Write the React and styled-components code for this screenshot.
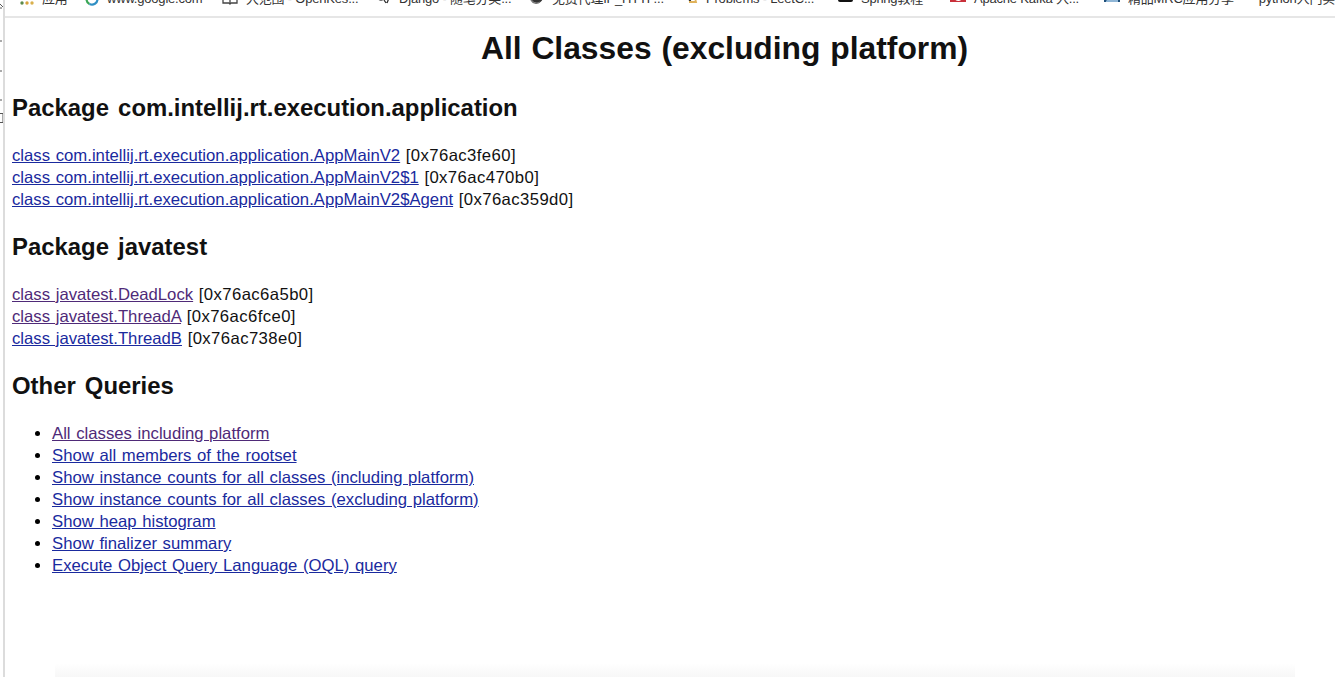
import React from 'react'
import styled, { createGlobalStyle } from 'styled-components'

const GlobalStyle = createGlobalStyle`
  html, body {
    margin: 0;
    padding: 0;
    height: 100%;
    background: #fff;
    overflow: hidden;
  }
  body {
    font-family: "Liberation Sans", Arial, "Noto Sans CJK SC", sans-serif;
    color: #000;
  }
`

const AppsIcon = () => (
  <svg width="14" height="14" viewBox="0 0 14 14">
    <circle cx="2" cy="11" r="1.7" fill="#5b8a4a" />
    <circle cx="7" cy="11" r="1.7" fill="#d9a23c" />
    <circle cx="12" cy="11" r="1.7" fill="#d9b04c" />
  </svg>
)

const GoogleIcon = () => (
  <svg width="14" height="14" viewBox="0 0 14 14" fill="none" strokeWidth="2.2">
    <path d="M1.5 7a5.5 5.5 0 0 0 3 5" stroke="#3aa655" />
    <path d="M4.5 12a5.5 5.5 0 0 0 8-5" stroke="#2f8fc4" />
  </svg>
)

const BookIcon = () => (
  <svg width="16" height="14" viewBox="0 0 16 14" fill="none" stroke="#444" strokeWidth="1.3">
    <path d="M1 2v9h6l1 1 1-1h6V2" />
    <path d="M8 2v9" />
    <path d="M3 4h3M3 6.5h3M10 4h3M10 6.5h3" />
  </svg>
)

const DjangoIcon = () => (
  <svg width="15" height="14" viewBox="0 0 15 14" fill="none" stroke="#333" strokeWidth="1.3">
    <circle cx="5" cy="4" r="4" />
    <path d="M8 8l2 3M13 6l-2 5" />
  </svg>
)

const SwirlIcon = () => (
  <svg width="14" height="14" viewBox="0 0 14 14" fill="none">
    <circle cx="7" cy="5" r="6" fill="#333" />
    <circle cx="6.5" cy="4" r="2.6" fill="#fff" />
    <path d="M1 8a6 6 0 0 0 9 2" stroke="#777" strokeWidth="1.4" />
  </svg>
)

const LeetIcon = () => (
  <svg width="14" height="14" viewBox="0 0 14 14" fill="none">
    <path d="M1.5 3l5 6" stroke="#222" strokeWidth="1.8" />
    <path d="M5 10h7l-1-4" stroke="#e0b25a" strokeWidth="1.8" />
  </svg>
)

const SpringIcon = () => (
  <svg width="15" height="14" viewBox="0 0 15 14">
    <rect x="0" y="-4" width="15" height="14" rx="2" fill="#111" />
    <path d="M5 2.5h5v4H5z" fill="#fff" />
  </svg>
)

const KafkaIcon = () => (
  <svg width="16" height="14" viewBox="0 0 16 14">
    <rect x="0" y="-4" width="16" height="14" fill="#c9303a" />
    <path d="M11 2.5a3.5 3.5 0 1 0 0 4.5" fill="none" stroke="#fff" strokeWidth="1.6" />
  </svg>
)

const MrcIcon = () => (
  <svg width="16" height="14" viewBox="0 0 16 14">
    <rect x="0" y="-4" width="16" height="14" fill="#1f4f7a" />
    <path d="M2 9l5-5 2 2 5-5v9H2z" fill="#8fb6d6" />
  </svg>
)

const PythonIcon = () => (
  <svg width="15" height="14" viewBox="0 0 15 14">
    <circle cx="7.5" cy="1" r="4.5" fill="#333" />
    <path d="M0.5 6.5h14L11 10H4z" fill="#222" />
  </svg>
)

// bits of the window behind, showing at the very left edge
const RailMarks = () => (
  <svg width="3" height="130" viewBox="0 0 3 130" fill="none" stroke="#555" strokeWidth="1">
    <path d="M0 4l3 3M0 8h2" />
    <path d="M0 41h2M0 71h2M0 100h2" />
    <path d="M0 113.5h3v9H0" />
  </svg>
)

const bookmarks = [
  { icon: <AppsIcon />, label: '应用', width: 65 },
  { icon: <GoogleIcon />, label: 'www.google.com', width: 137 },
  { icon: <BookIcon />, label: '大范围 - OpenKes...', width: 154 },
  { icon: <DjangoIcon />, label: 'Django - 随笔分类...', width: 154 },
  { icon: <SwirlIcon />, label: '免费代理IP_HTTP...', width: 154 },
  { icon: <LeetIcon />, label: 'Problems - LeetC...', width: 154 },
  { icon: <SpringIcon />, label: 'Spring教程', width: 112 },
  { icon: <KafkaIcon />, label: 'Apache Kafka 入...', width: 154 },
  { icon: <MrcIcon />, label: '精品MRC应用分享', width: 142 },
  { icon: <PythonIcon />, label: 'python入门实', width: 89 },
]

const appClasses = [
  { name: 'class com.intellij.rt.execution.application.AppMainV2', addr: '[0x76ac3fe60]' },
  { name: 'class com.intellij.rt.execution.application.AppMainV2$1', addr: '[0x76ac470b0]' },
  { name: 'class com.intellij.rt.execution.application.AppMainV2$Agent', addr: '[0x76ac359d0]' },
]

const testClasses = [
  { name: 'class javatest.DeadLock', addr: '[0x76ac6a5b0]', visited: true },
  { name: 'class javatest.ThreadA', addr: '[0x76ac6fce0]', visited: true },
  { name: 'class javatest.ThreadB', addr: '[0x76ac738e0]' },
]

const queries = [
  { label: 'All classes including platform', visited: true },
  { label: 'Show all members of the rootset' },
  { label: 'Show instance counts for all classes (including platform)' },
  { label: 'Show instance counts for all classes (excluding platform)' },
  { label: 'Show heap histogram' },
  { label: 'Show finalizer summary' },
  { label: 'Execute Object Query Language (OQL) query' },
]

const ClassList = ({ items }) => (
  <Rows>
    {items.map((item) => (
      <Row key={item.name}>
        <ClassLink href="#" $visited={item.visited}>{item.name}</ClassLink> <Address>{item.addr}</Address>
      </Row>
    ))}
  </Rows>
)

const App = () => {
  return (
    <Page>
      <GlobalStyle />
      <Rail>
        <RailMarks />
      </Rail>
      <Content>
        <BookmarkBar>
          {bookmarks.map((b) => (
            <Bookmark key={b.label} $width={b.width}>
              {b.icon}
              <BookmarkLabel>{b.label}</BookmarkLabel>
            </Bookmark>
          ))}
        </BookmarkBar>
        <Main>
          <Title>All Classes (excluding platform)</Title>
          <Heading>Package com.intellij.rt.execution.application</Heading>
          <ClassList items={appClasses} />
          <Heading>Package javatest</Heading>
          <ClassList items={testClasses} />
          <Heading>Other Queries</Heading>
          <QueryList>
            {queries.map((q) => (
              <li key={q.label}>
                <ClassLink href="#" $visited={q.visited}>{q.label}</ClassLink>
              </li>
            ))}
          </QueryList>
        </Main>
        <BottomShade />
      </Content>
    </Page>
  )
}

export default App

const Page = styled.div`
  display: flex;
  height: 677px;
  width: 1335px;
  overflow: hidden;
`
const Rail = styled.div`
  width: 3px;
  flex: none;
  background: #fff;
  border-right: 2px solid #dcdcdc;
`
const Content = styled.div`
  position: relative;
  flex: 1;
  display: flex;
  flex-direction: column;
  min-width: 0;
`
const BookmarkBar = styled.div`
  display: flex;
  height: 16px;
  padding-left: 15px;
  border-bottom: 2px solid #e6e6e6;
  overflow: hidden;
  flex: none;
`
const Bookmark = styled.div`
  display: flex;
  align-items: center;
  gap: 8px;
  width: ${(p) => p.$width}px;
  height: 14px;
  margin-top: -8px;
  flex: none;
  color: #333;
`
const BookmarkLabel = styled.span`
  font-size: 13px;
  line-height: 14px;
  letter-spacing: -0.2px;
  white-space: nowrap;
`
const Main = styled.main`
  padding-left: 7px;
`
const Title = styled.h1`
  margin: 10px 0 24px;
  padding-left: 102px;
  font-size: 31.8px;
  line-height: 40px;
  font-weight: 700;
  word-spacing: 1px;
  text-align: center;
  color: #111;
`
const Heading = styled.h2`
  margin: 20px 0 21px;
  font-size: 23.9px;
  line-height: 32px;
  font-weight: 700;
  word-spacing: 2.5px;
  color: #111;
`
const Rows = styled.div`
  font-size: 16.72px;
  line-height: 22px;
  word-spacing: 1px;
  color: #111;
`
const Row = styled.div`
  white-space: nowrap;
`
const ClassLink = styled.a`
  color: ${(p) => (p.$visited ? '#4f2a78' : '#1a2a9e')};
  text-decoration: underline;
`
const Address = styled.span`
  letter-spacing: 0.4px;
`
const QueryList = styled.ul`
  margin: 0;
  padding-left: 40px;
  font-size: 16.72px;
  line-height: 22px;
  word-spacing: 1px;
`
const BottomShade = styled.div`
  position: absolute;
  left: 50px;
  right: 40px;
  bottom: 0;
  height: 14px;
  background: linear-gradient(to bottom, rgba(248, 248, 248, 0), #f7f7f7);
`
